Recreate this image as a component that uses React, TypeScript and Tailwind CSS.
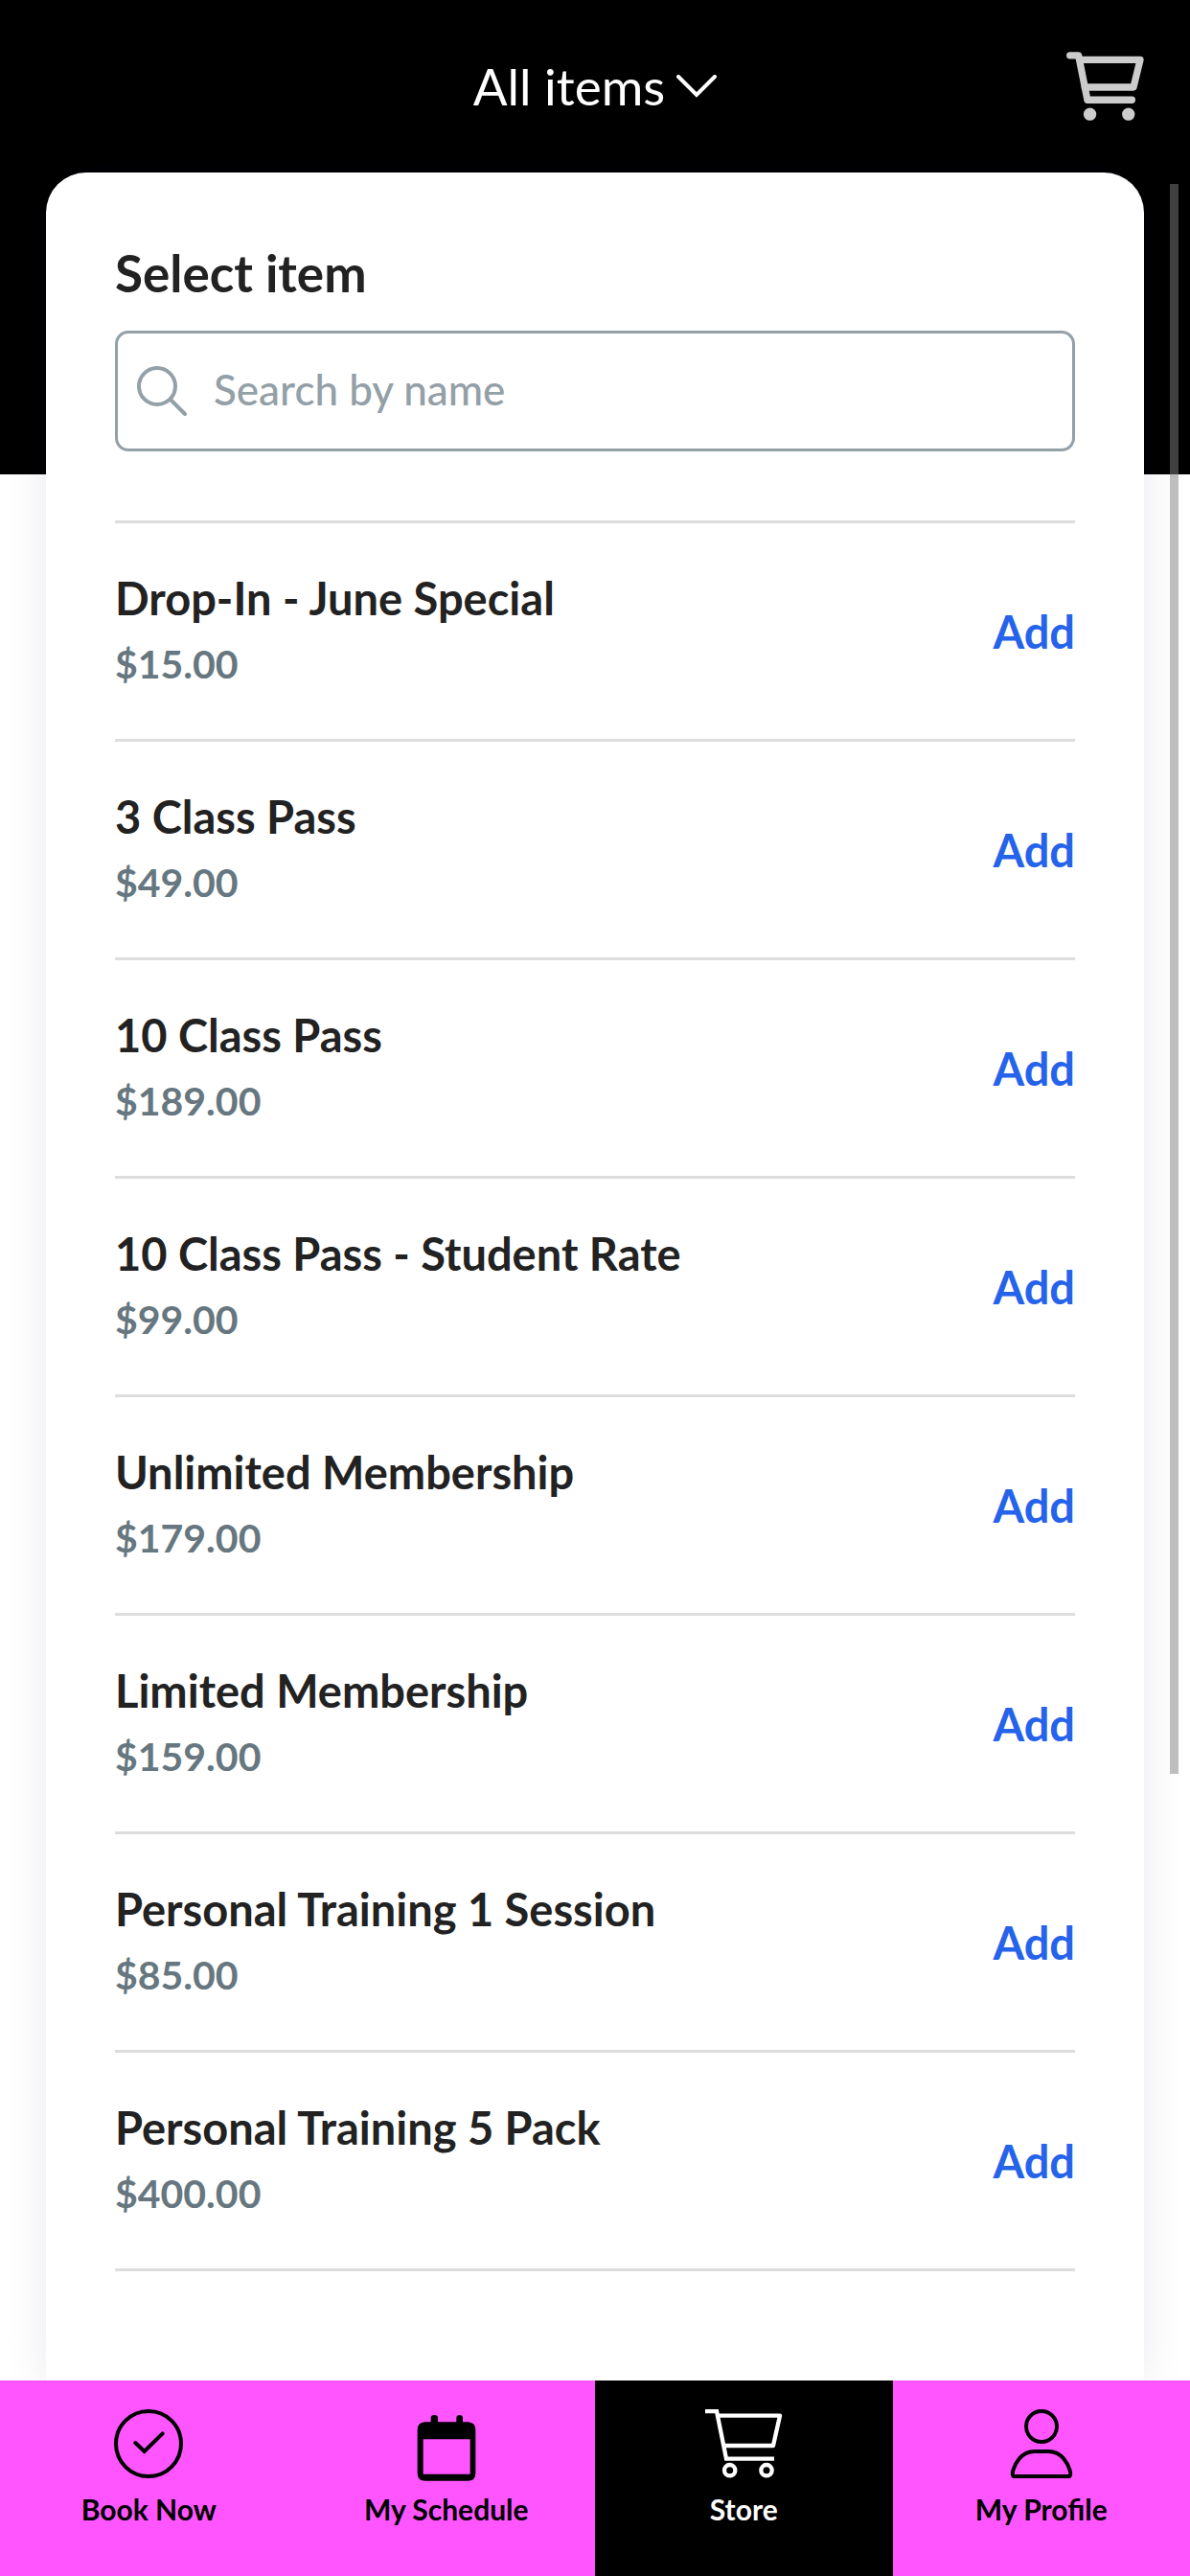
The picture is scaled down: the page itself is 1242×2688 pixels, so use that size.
import { useState } from "react";

type Item = {
  name: string;
  price: string;
}

const items: Item[] = [
  { name: "Drop-In - June Special", price: "$15.00" },
  { name: "3 Class Pass", price: "$49.00" },
  { name: "10 Class Pass", price: "$189.00" },
  { name: "10 Class Pass - Student Rate", price: "$99.00" },
  { name: "Unlimited Membership", price: "$179.00" },
  { name: "Limited Membership", price: "$159.00" },
  { name: "Personal Training 1 Session", price: "$85.00" },
  { name: "Personal Training 5 Pack", price: "$400.00" },
]

function HeaderCartIcon() {
  return (
    <svg viewBox="0 0 244 216" className="h-[72px] w-[81px]" fill="none" stroke="currentColor" strokeWidth="22" strokeLinecap="round" strokeLinejoin="round" aria-hidden="true">
      <path d="M11 11H38L66 151H206" />
      <path d="M45 25H232L211 111H58" />
      <circle cx="74" cy="196" r="20" fill="currentColor" stroke="none" />
      <circle cx="195" cy="196" r="20" fill="currentColor" stroke="none" />
    </svg>
  )
}

function ChevronIcon() {
  return (
    <svg viewBox="0 0 42 24" className="h-6 w-[42px]" fill="none" stroke="currentColor" strokeWidth="4" strokeLinecap="round" aria-hidden="true">
      <path d="M2 2L21 21L40 2" />
    </svg>
  )
}

function SearchIcon() {
  return (
    <svg viewBox="0 0 52 52" className="size-[52px] shrink-0" fill="none" stroke="currentColor" strokeWidth="4" strokeLinecap="round" aria-hidden="true">
      <circle cx="21" cy="21" r="19" />
      <path d="M35 35L50 50" />
    </svg>
  )
}

function BookIcon() {
  return (
    <svg viewBox="0 0 216 216" className="size-[72px]" fill="none" stroke="currentColor" strokeWidth="12" strokeLinecap="round" aria-hidden="true">
      <circle cx="108" cy="108" r="102" />
      <path d="M67 105L95 132L152 76" />
    </svg>
  )
}

function ScheduleIcon() {
  return (
    <svg viewBox="0 0 216 216" className="size-[72px] overflow-visible" fill="currentColor" aria-hidden="true">
      <path fillRule="evenodd" d="M41 40H175Q199 42 199 64V200Q199 224 175 224H41Q17 224 17 200V64Q17 42 41 40ZM35 94V203H182V94Z" />
      <path d="M59 48V28Q59 18 70 18T81 28V48ZM139 48V28Q139 18 149 18T159 28V48Z" />
    </svg>
  )
}

function StoreIcon() {
  return (
    <svg viewBox="0 0 243 216" className="h-[72px] w-[81px]" fill="none" stroke="currentColor" strokeWidth="13" aria-hidden="true">
      <path d="M0 6H36L66 155H216" />
      <path d="M38 20H234L213 114H58" strokeLinejoin="round" />
      <circle cx="77" cy="191" r="17" />
      <circle cx="192" cy="191" r="17" />
    </svg>
  )
}

function ProfileIcon() {
  return (
    <svg viewBox="0 0 216 216" className="size-[72px]" fill="none" stroke="currentColor" strokeWidth="12" strokeLinejoin="round" aria-hidden="true">
      <circle cx="108" cy="54" r="48" />
      <path d="M20 210C14 205 19 178 38 155Q58 132 86 132H130Q158 132 178 155C197 178 202 205 196 210Z" />
    </svg>
  )
}

const tabs = [
  { label: "Book Now", href: "#book", Icon: BookIcon },
  { label: "My Schedule", href: "#schedule", Icon: ScheduleIcon },
  { label: "Store", href: "#store", Icon: StoreIcon },
  { label: "My Profile", href: "#profile", Icon: ProfileIcon },
]

function ItemRow({ item }: { item: Item }) {
  return (
    <li className="flex h-[228px] items-center justify-between border-b-[3px] border-[#dddddd]">
      <div className="pb-1">
        <h2 className="text-[47px] leading-[72px] font-bold text-[#222222]">{item.name}</h2>
        <p className="text-[41px] leading-[66px] font-bold text-[#667780]">{item.price}</p>
      </div>
      <button type="button" aria-label={`Add ${item.name}`} className="cursor-pointer text-[47px] leading-[60px] font-bold text-[#2563eb]">Add</button>
    </li>
  )
}

function App() {
  const [search, setSearch] = useState("")
  const shown = items.filter((item) => item.name.toLowerCase().includes(search.toLowerCase()))

  return (
    <div className="relative flex h-screen flex-col overflow-hidden bg-white font-[Lato,'Open_Sans',sans-serif]">
      <header className="grid h-[495px] shrink-0 grid-cols-[1fr_auto_1fr] items-start bg-black px-12 pt-[54px]">
        <button type="button" className="col-start-2 flex h-[72px] cursor-pointer items-center gap-3 text-[53px] leading-[72px] font-normal text-white">
          All items
          <ChevronIcon />
        </button>
        <button type="button" aria-label="Cart" className="cursor-pointer justify-self-end text-[#cccccc]">
          <HeaderCartIcon />
        </button>
      </header>

      <main className="mx-12 -mt-[315px] flex-1 overflow-hidden rounded-t-[42px] bg-white px-[72px] pt-[72px] shadow-[0_0_48px_rgba(20,20,70,0.09)]">
        <h1 className="text-[53px] leading-[66px] font-bold text-[#222222]">
          <label htmlFor="search">Select item</label>
        </h1>
        <div className="mt-[27px] flex h-[126px] items-center gap-7 rounded-[14px] border-[3px] border-[#93a0a7] px-5 text-[#93a0a7]">
          <SearchIcon />
          <input id="search" type="text" placeholder="Search by name" value={search} onChange={(e) => setSearch(e.target.value)} className="h-full min-w-0 flex-1 pb-1 text-[44px] font-medium outline-none placeholder:text-[#93a0a7]" />
        </div>
        <ul className="mt-[72px] border-t-[3px] border-[#dddddd]">
          {shown.map((item) => (
            <ItemRow key={item.name} item={item} />
          ))}
        </ul>
      </main>

      <nav className="relative grid h-[204px] shrink-0 grid-cols-4 bg-[#ff55ff]">
        {tabs.map(({ label, href, Icon }) => (
          <a key={label} href={href} className={`flex flex-col items-center gap-3 pt-[30px] ${label === "Store" ? "bg-black text-white" : "text-black"}`}>
            <Icon />
            <span className="text-[30px] leading-10 font-bold">{label}</span>
          </a>
        ))}
      </nav>

      <div className="absolute top-48 right-3 h-[1659px] w-[9px] bg-[#808080]/50"></div>
    </div>
  )
}

export default App
